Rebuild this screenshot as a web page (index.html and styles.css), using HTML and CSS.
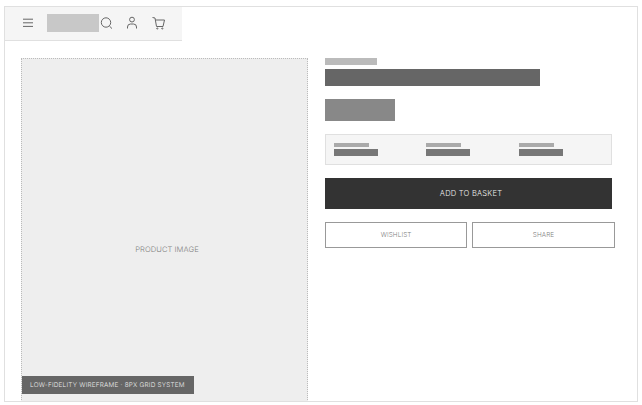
FILE: index.html
```html
<!DOCTYPE html>
<html lang="en">
<head>
<meta charset="utf-8">
<title>Product wireframe</title>
<link rel="stylesheet" href="styles.css">
</head>
<body>
<div class="frame">
  <header class="topbar">
    <svg class="icon menu" width="14" height="14" viewBox="0 0 14 14" fill="none" stroke="#666"><path d="M2 3.2h10M2 6.8h10M2 10.4h10"/></svg>
    <div class="logo"></div>
    <svg class="icon" width="14" height="14" viewBox="0 0 14 14" fill="none" stroke="#666"><circle cx="7" cy="6.5" r="4.7"/><path d="M10.4 10l2.6 2.6"/></svg>
    <svg class="icon" width="14" height="14" viewBox="0 0 14 14" fill="none" stroke="#666"><circle cx="7" cy="3.6" r="2.4"/><path d="M2.5 12.5v-1.5a3 3 0 0 1 3-3h3a3 3 0 0 1 3 3v1.5"/></svg>
    <svg class="icon" width="14" height="14" viewBox="0 0 14 14" fill="none" stroke="#666"><path d="M1.5 1.5l2.5.5 1.5 8.5h6.5l1.5-6.5H4.5"/><circle cx="6.3" cy="12.5" r=".6"/><circle cx="11.3" cy="12.5" r=".6"/></svg>
  </header>
  <main class="content">
    <section class="gallery">
      <span class="gallery-label">PRODUCT IMAGE</span>
    </section>
    <section class="details">
      <div class="bar eyebrow"></div>
      <div class="bar title"></div>
      <div class="bar price"></div>
      <div class="specs">
        <div class="spec"><div class="bar spec-key"></div><div class="bar spec-val"></div></div>
        <div class="spec"><div class="bar spec-key"></div><div class="bar spec-val"></div></div>
        <div class="spec"><div class="bar spec-key"></div><div class="bar spec-val"></div></div>
      </div>
      <button class="primary">ADD TO BASKET</button>
      <div class="actions">
        <button class="secondary">WISHLIST</button>
        <button class="secondary">SHARE</button>
      </div>
    </section>
  </main>
  <div class="caption">LOW-FIDELITY WIREFRAME · 8PX GRID SYSTEM</div>
</div>
</body>
</html>
```

FILE: styles.css
```css
* { box-sizing: border-box; }
html, body { margin: 0; height: 100%; background: #fff; overflow: hidden; }
body { padding: 6px 4px 3px 4px; font-family: Inter, "Liberation Sans", sans-serif; }
.frame {
  position: relative;
  width: 634px;
  height: 396px;
  border: 1px solid #e0e0e0;
  background: #fff;
  overflow: hidden;
  opacity: .999;
  font-weight: 300;
  text-rendering: geometricPrecision;
}
.topbar {
  width: 177px;
  height: 34px;
  background: #f5f5f5;
  border-bottom: 1px solid #e0e0e0;
  display: flex;
  align-items: center;
  padding: 0 0 1px 16px;
}
.icon { flex: none; display: block; }
.menu { margin-right: 12px; }
.logo { flex: none; width: 52px; height: 18px; background: #c8c8c8; }
.icon + .icon { margin-left: 12px; }
.content {
  display: flex;
  align-items: flex-start;
  padding: 17px 22px 0 16px;
  gap: 17px;
}
.gallery {
  flex: none;
  width: 287px;
  height: 382px;
  background: #eee;
  border: 1px dotted #bbb;
  display: flex;
  align-items: center;
  justify-content: center;
  padding-left: 5px;
}
.gallery-label { font-size: 7.6px; letter-spacing: .05px; color: #808080; }
.caption {
  position: absolute;
  left: 17px;
  bottom: 7px;
  height: 18px;
  width: 172px;
  background: #666;
  color: #eee;
  font-size: 6.4px;
  letter-spacing: .22px;
  line-height: 18px;
  padding-left: 8px;
  white-space: nowrap;
}
.details { flex: 1; min-width: 0; display: flex; flex-direction: column; }
.bar { display: block; }
.eyebrow { width: 52px; height: 7px; background: #bbb; }
.title { width: 215px; height: 17px; background: #666; margin-top: 4px; }
.price { width: 70px; height: 22px; background: #888; margin-top: 13px; }
.specs {
  width: 287px;
  height: 31px;
  margin-top: 13px;
  padding: 8px;
  background: #f5f5f5;
  border: 1px solid #e0e0e0;
  display: grid;
  grid-template-columns: repeat(3, 1fr);
  gap: 0 8px;
}
.spec-key { width: 35px; height: 4px; background: #aaa; }
.spec-val { width: 44px; height: 7px; background: #777; margin-top: 2px; }
button { font-family: inherit; font-weight: inherit; cursor: pointer; padding: 0; }
.primary {
  width: 287px;
  height: 31px;
  margin-top: 13px;
  padding-left: 5px;
  border: 0;
  background: #333;
  color: #eee;
  font-size: 7.6px;
  letter-spacing: .2px;
}
.actions { display: flex; gap: 5.3px; margin-top: 13px; width: 289.6px; }
.secondary {
  flex: 1;
  height: 26px;
  background: #fff;
  border: 1px solid #999;
  color: #808080;
  font-size: 6.4px;
  letter-spacing: .1px;
}
```
